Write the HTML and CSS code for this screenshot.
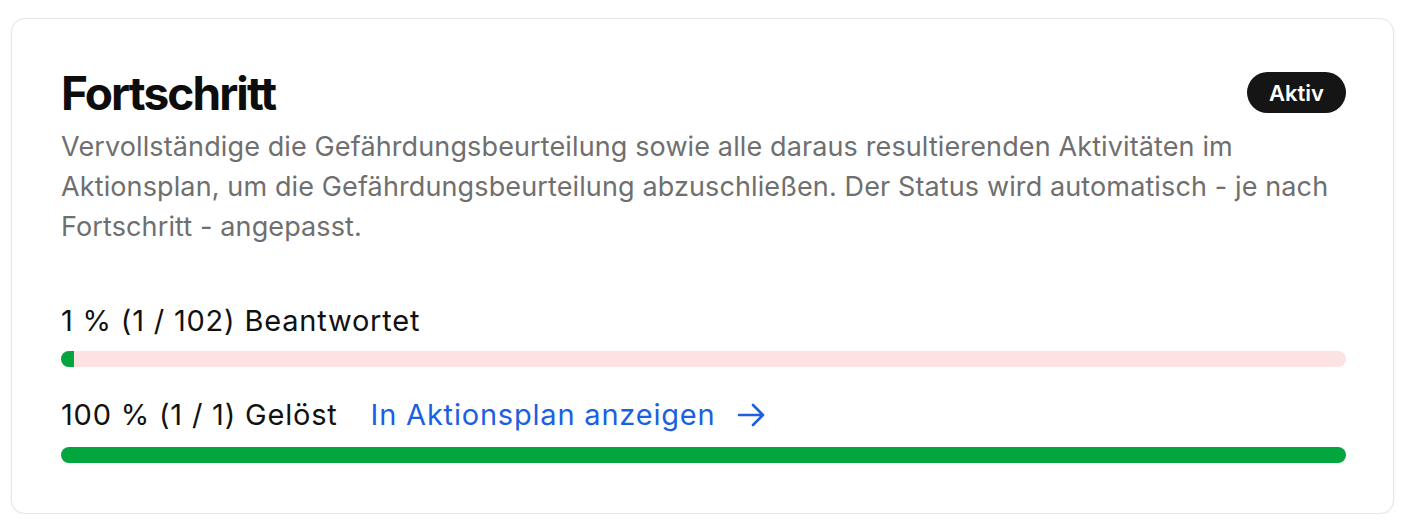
FILE: index.html
```html
<!DOCTYPE html>
<html lang="de">
<head>
<meta charset="utf-8">
<link rel="stylesheet" href="styles.css">
</head>
<body>
<section class="card">
  <header class="card-head">
    <h1 class="title">Fortschritt</h1>
    <span class="badge">Aktiv</span>
  </header>
  <p class="desc">Vervollständige die Gefährdungsbeurteilung sowie alle daraus resultierenden Aktivitäten im Aktionsplan, um die Gefährdungsbeurteilung abzuschließen. Der Status wird automatisch - je nach Fortschritt - angepasst.</p>
  <div class="progress first">
    <div class="label">1 % (1 / 102) Beantwortet</div>
    <div class="track"><div class="fill" style="width: 1%"></div></div>
  </div>
  <div class="progress second">
    <div class="label">100 % (1 / 1) Gelöst <a class="link" href="#">In Aktionsplan anzeigen <svg class="arrow" width="29" height="24" viewBox="0 0 29 24" fill="none" stroke="currentColor" stroke-width="2.6" stroke-linecap="round" stroke-linejoin="round"><path d="M2 12h24M16 2l10 10-10 10"/></svg></a></div>
    <div class="track"><div class="fill" style="width: 100%"></div></div>
  </div>
</section>
</body>
</html>
```
FILE: styles.css
```css
html, body {
  margin: 0;
  padding: 0;
  background: #ffffff;
}
body {
  padding: 18px 20px 0 11px;
  font-family: Inter, "Noto Sans", sans-serif;
  color: #111111;
}
.card {
  box-sizing: border-box;
  width: 1383px;
  height: 496px;
  border: 1px solid #e6e6e6;
  border-radius: 14px;
  box-shadow: 0 1px 3px rgba(0, 0, 0, 0.06);
  padding: 46px 47px 0 49px;
  background: #ffffff;
}
.card-head {
  display: flex;
  justify-content: space-between;
  align-items: flex-start;
}
.title {
  margin: 0;
  font-size: 46px;
  font-weight: 700;
  letter-spacing: -1.9px;
  line-height: 56px;
  color: #0d0d0d;
}
.badge {
  margin-top: 7px;
  display: inline-flex;
  align-items: center;
  justify-content: center;
  height: 41px;
  padding: 0 22px;
  border-radius: 21px;
  background: #151515;
  color: #ffffff;
  font-size: 22px;
  font-weight: 600;
}
.desc {
  margin: 6px 0 0;
  font-size: 27px;
  letter-spacing: 0.12px;
  line-height: 40px;
  color: #6f6f6f;
}
.progress .label {
  display: flex;
  align-items: center;
  font-size: 29px;
  letter-spacing: 0.8px;
  line-height: 40px;
  color: #111111;
}
.progress.first { margin-top: 54px; }
.progress.second { margin-top: 28px; }
.track {
  margin-top: 10px;
  height: 16px;
  border-radius: 8px;
  background: #fde2e2;
  overflow: hidden;
}
.second .track { margin-top: 12px; }
.fill {
  height: 100%;
  min-width: 12px;
  background: #02a53e;
}
.link {
  margin-left: 33px;
  display: inline-flex;
  align-items: center;
  gap: 22px;
  color: #1b5fe3;
  text-decoration: none;
}
.arrow { display: block; }
```
